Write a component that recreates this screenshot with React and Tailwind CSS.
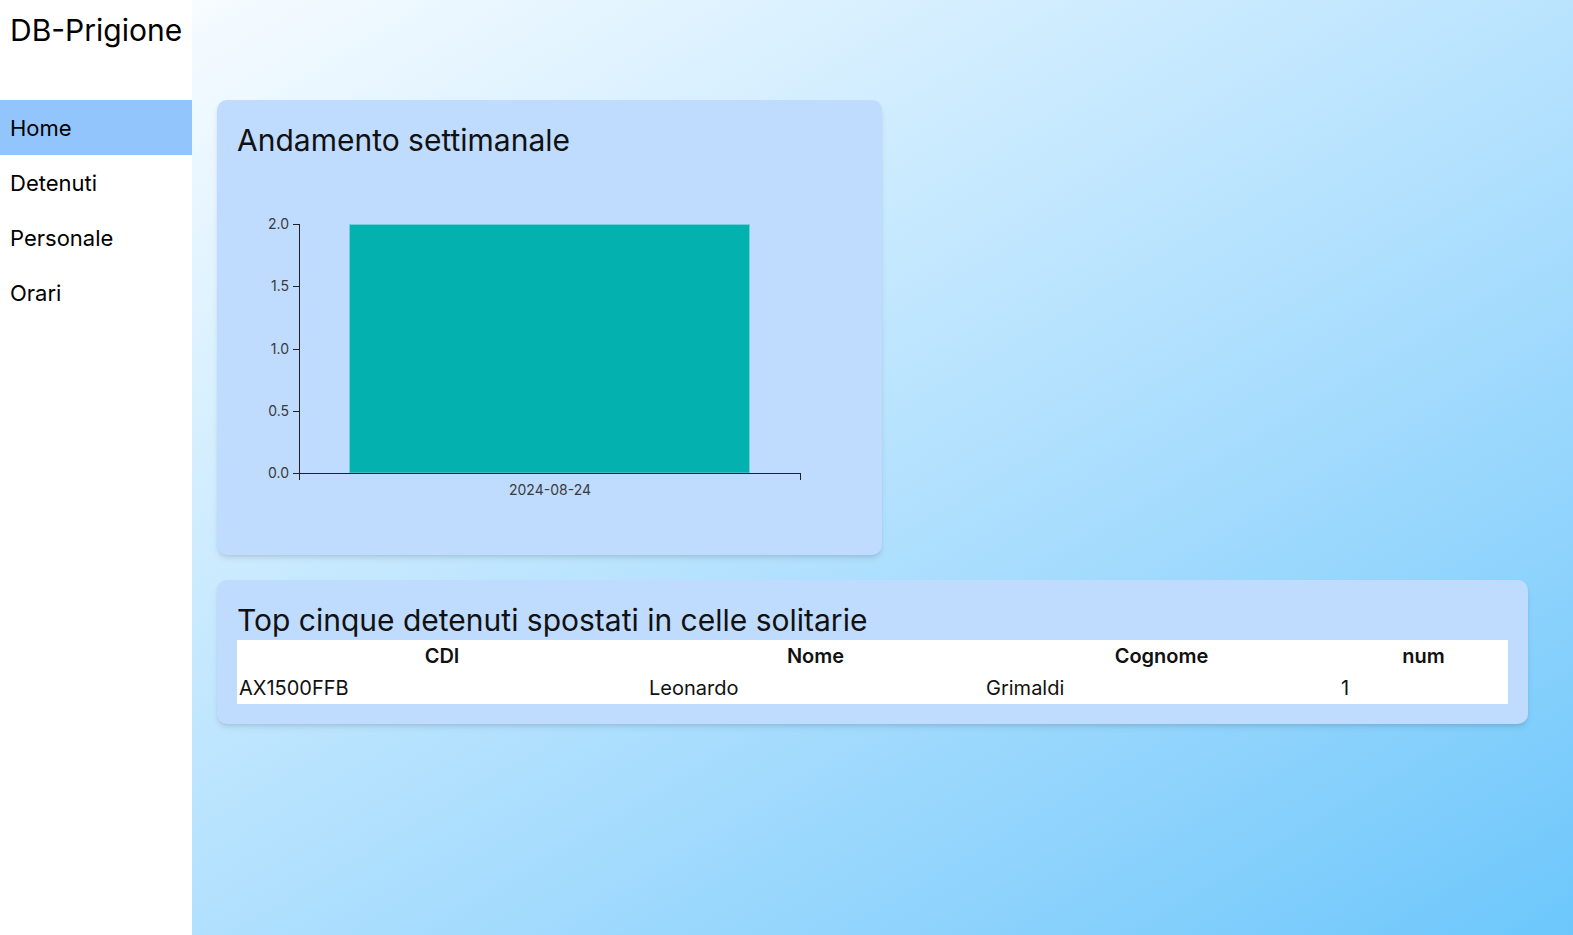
import React from "react";

function Chart() {
  const ticks = [
    { v: "2.0", y: 62 },
    { v: "1.5", y: 124 },
    { v: "1.0", y: 187 },
    { v: "0.5", y: 249 },
    { v: "0.0", y: 311 },
  ];
  return (
    <svg width="600" height="373" className="block mt-[2px]" style={{ fontFamily: "Inter, 'Noto Sans', sans-serif" }}>
      <rect x="112.5" y="62.5" width="400" height="248.5" fill="#03b2af" stroke="#6fcfd3" strokeWidth="1" />
      <line x1="62.5" y1="62" x2="62.5" y2="311.5" stroke="#222" strokeWidth="1" />
      {ticks.map((t) => (
        <g key={t.v}>
          <line x1="56" y1={t.y + 0.5} x2="62.5" y2={t.y + 0.5} stroke="#222" strokeWidth="1" />
          <text x="52" y={t.y + 5} textAnchor="end" fontSize="14" fill="#3a3a3a">
            {t.v}
          </text>
        </g>
      ))}
      <line x1="62" y1="311.5" x2="563.5" y2="311.5" stroke="#222" strokeWidth="1" />
      <line x1="62.5" y1="311" x2="62.5" y2="318" stroke="#222" strokeWidth="1" />
      <line x1="563.5" y1="311" x2="563.5" y2="318" stroke="#222" strokeWidth="1" />
      <text x="313" y="333" textAnchor="middle" fontSize="14" fill="#3a3a3a">
        2024-08-24
      </text>
    </svg>
  );
}

export default function App() {
  const nav = ["Home", "Detenuti", "Personale", "Orari"];
  return (
    <div
      className="flex min-h-screen h-[935px] bg-linear-to-br from-white to-[#6cc7fb] text-[#111]"
      style={{ fontFamily: "Inter, 'Noto Sans', sans-serif" }}
    >
      <aside className="w-48 shrink-0 bg-white flex flex-col">
        <div className="h-[100px] pt-3 pl-[10px] text-3xl leading-9 text-black">DB-Prigione</div>
        <nav className="flex flex-col">
          {nav.map((n, i) => (
            <div
              key={n}
              className={
                "h-[55px] flex items-center pl-[10px] pt-[2px] text-[22px] text-black " +
                (i === 0 ? "bg-[#93c5fd]" : "")
              }
            >
              {n}
            </div>
          ))}
        </nav>
      </aside>
      <main className="flex-1 pl-[25px] pt-[100px] pr-[45px] flex flex-col gap-[25px] items-start">
        <section className="w-[665px] rounded-[10px] bg-[#bfdbfe] shadow-md px-5 pt-5 pb-5">
          <h2 className="text-3xl leading-[40px]">Andamento settimanale</h2>
          <Chart />
        </section>
        <section className="w-full rounded-[10px] bg-[#bfdbfe] shadow-md px-5 pt-5 pb-5">
          <h2 className="text-3xl leading-[40px]">Top cinque detenuti spostati in celle solitarie</h2>
          <table className="w-full bg-white text-[20px] table-fixed">
            <colgroup>
              <col className="w-[410px]" />
              <col className="w-[337px]" />
              <col className="w-[355px]" />
              <col />
            </colgroup>
            <thead>
              <tr className="h-8">
                <th className="font-semibold text-center">CDI</th>
                <th className="font-semibold text-center">Nome</th>
                <th className="font-semibold text-center">Cognome</th>
                <th className="font-semibold text-center">num</th>
              </tr>
            </thead>
            <tbody>
              <tr className="h-8">
                <td className="pl-[2px]">AX1500FFB</td>
                <td className="pl-[2px]">Leonardo</td>
                <td className="pl-[2px]">Grimaldi</td>
                <td className="pl-[2px]">1</td>
              </tr>
            </tbody>
          </table>
        </section>
      </main>
    </div>
  );
}
